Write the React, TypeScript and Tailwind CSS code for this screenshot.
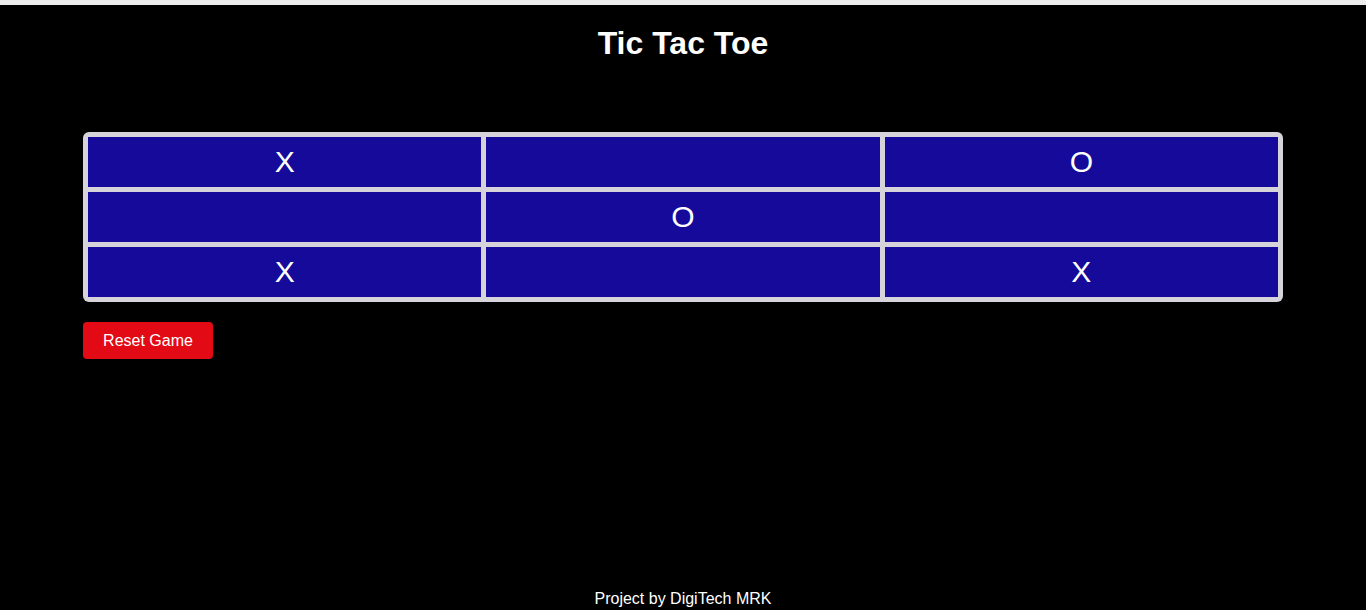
const board = ['X', '', 'O', '', 'O', '', 'X', '', 'X'];

function Cell({ value }: { value: string }) {
  return (
    <div className="flex h-[50px] items-center justify-center bg-[#150a9a] text-[30px] leading-none text-white">
      {value}
    </div>
  );
}

export default function App() {
  return (
    <div className="flex h-[610px] flex-col overflow-hidden bg-black font-['Liberation_Sans',Arial,sans-serif] text-white">
      <div className="h-[5px] shrink-0 bg-[#ececec]" />
      <h1 className="mt-[21px] text-center text-[32px] font-bold leading-[34px]">Tic Tac Toe</h1>

      <div className="mx-auto mt-[72px] w-[1200px]">
        <div className="grid grid-cols-3 gap-[5px] rounded-[6px] bg-[#d7d3db] p-[5px]">
          {board.map((v, i) => (
            <Cell key={i} value={v} />
          ))}
        </div>
        <button className="mt-[20px] h-[37px] w-[130px] rounded-[4px] bg-[#e20a14] text-[16px] text-white">
          Reset Game
        </button>
      </div>

      <footer className="mt-auto pb-[2px] text-center text-[16px] leading-[18px]">Project by DigiTech MRK</footer>
    </div>
  );
}
